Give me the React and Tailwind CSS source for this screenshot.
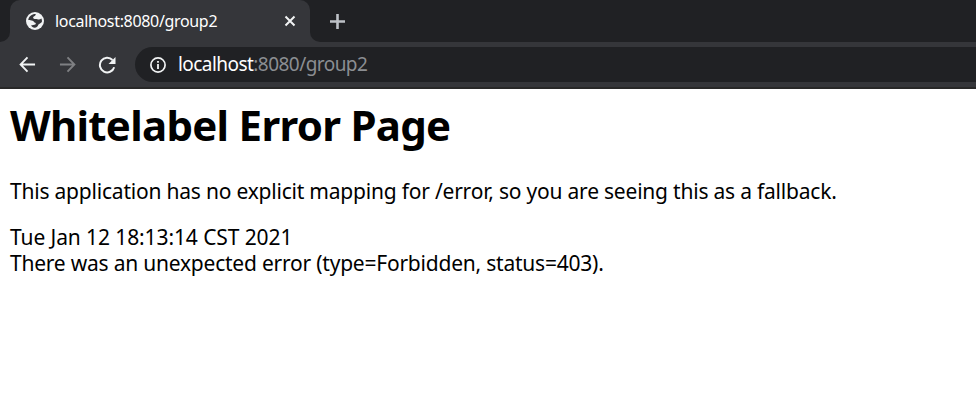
import React from "react";

function GlobeIcon() {
  return (
    <svg className="size-[18px] shrink-0" viewBox="0 0 18 18">
      <circle cx="9" cy="9" r="9" fill="#f1f3f4" />
      <path
        d="M9.8 2C6 1.8 2.8 4.5 2.2 7.8C3.6 8.5 5.4 8.4 6.6 8.7C7.9 9 8 10.4 9.2 10.8C10 11.1 10 12 9.3 12.6C8.2 13.3 6.4 12.9 5 13.6C5.7 14.8 7 15.6 8.6 15.7C10.8 15.7 11.7 14.3 12.2 13C12.6 11.9 14.3 11.6 15.9 10C16.1 8.7 15.9 7.5 15.4 6.6C14.2 7.6 12.6 7.9 11.4 7.3C10.2 6.8 8.7 7.3 7.6 6.5C6.7 5.8 7.2 4.8 8.1 4.3C9 3.8 9.7 3.2 9.8 2Z"
        fill="#35363a"
      />
    </svg>
  );
}

function ArrowIcon({ className }) {
  return (
    <svg className={className} viewBox="0 0 18 18" fill="none" stroke="currentColor" strokeWidth="2">
      <path d="M17 9H2.5M9 1.5L1.7 9L9 16.5" />
    </svg>
  );
}

function ReloadIcon() {
  return (
    <svg className="ml-[22px] size-[18px] shrink-0" viewBox="0 0 18 18">
      <path d="M16.2 11.2A7.3 7.3 0 1 1 14.5 4" fill="none" stroke="#f1f3f4" strokeWidth="2" />
      <path d="M17.5 1V8H10.5Z" fill="#f1f3f4" />
    </svg>
  );
}

function TabStrip() {
  return (
    <div className="flex h-[42px] items-stretch bg-[#35363a]">
      <div className="w-[10px] rounded-br-[10px] bg-[#202124]" />
      <div className="w-[300px] bg-[#202124]">
        <div className="flex h-full items-center rounded-t-[10px] bg-[#35363a] pl-4 pr-[14px]">
          <GlobeIcon />
          <span className="ml-[11px] flex-1 whitespace-nowrap text-[16px] leading-[22px] tracking-[-0.33px] text-white">
            localhost:8080/group2
          </span>
          <svg className="size-3" viewBox="0 0 12 12" stroke="#f1f3f4" strokeWidth="2">
            <path d="M1.5 1.5L10.5 10.5M10.5 1.5L1.5 10.5" />
          </svg>
        </div>
      </div>
      <div className="flex flex-1 items-center rounded-bl-[10px] bg-[#202124] pl-5">
        <svg className="size-[15px]" viewBox="0 0 15 15" stroke="#bdc1c6" strokeWidth="2.6">
          <path d="M7.5 0V15M0 7.5H15" />
        </svg>
      </div>
    </div>
  );
}

function Toolbar() {
  return (
    <div className="flex h-[47px] items-start border-b-2 border-[#282828] bg-[#35363a] pt-[5px]">
      <div className="flex h-[35px] w-[135px] shrink-0 items-center pl-[19px]">
        <ArrowIcon className="size-[17px] shrink-0 text-[#f1f3f4]" />
        <ArrowIcon className="ml-[23px] size-[17px] shrink-0 rotate-180 text-[#7f8083]" />
        <ReloadIcon />
      </div>
      <div className="flex h-[35px] flex-1 items-center rounded-l-full bg-[#202124] pl-[15px]">
        <svg className="size-4 shrink-0" viewBox="0 0 16 16">
          <circle cx="8" cy="8" r="7.1" fill="none" stroke="#f1f3f4" strokeWidth="1.7" />
          <path d="M7.1 7H8.9V12H7.1ZM7.1 4H8.9V5.7H7.1Z" fill="#f1f3f4" />
        </svg>
        <span className="ml-3 whitespace-nowrap pb-px text-[19px] leading-[26px] tracking-[-0.55px] text-[#8b8e92]">
          <span className="text-white">localhost</span>:8080/group2
        </span>
      </div>
    </div>
  );
}

export default function App() {
  return (
    <div className="h-[402px] w-[976px] overflow-hidden bg-white font-['Noto_Sans',sans-serif] text-black">
      <TabStrip />
      <Toolbar />
      <main className="whitespace-nowrap pl-[10px] text-[21px] leading-[26px]">
        <h1 className="pt-2 text-[42px] leading-[56px] font-bold tracking-[-0.72px]">Whitelabel Error Page</h1>
        <p className="mt-[25px] tracking-[-0.21px]">
          This application has no explicit mapping for /error, so you are seeing this as a fallback.
        </p>
        <div className="mt-5 tracking-[-0.1px]">Tue Jan 12 18:13:14 CST 2021</div>
        <div className="tracking-[-0.22px]">There was an unexpected error (type=Forbidden, status=403).</div>
      </main>
    </div>
  );
}
